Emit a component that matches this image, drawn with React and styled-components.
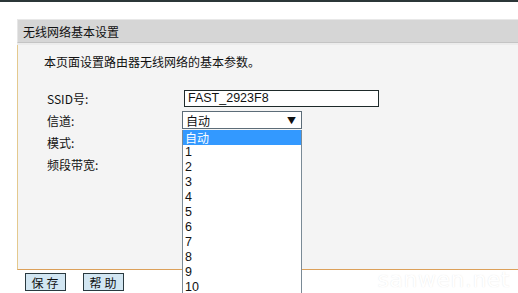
import React from "react";
import styled, { createGlobalStyle } from "styled-components";

const GlobalStyle = createGlobalStyle`
  html, body {
    margin: 0;
    padding: 0;
    background: #ffffff;
    overflow: hidden;
  }
  body {
    font-family: "Noto Sans CJK SC", "Liberation Sans", sans-serif;
    font-size: 12px;
    color: #111;
  }
`;

const Page = styled.div`
  position: relative;
  width: 518px;
  height: 293px;
  overflow: hidden;
  border-top: 2px solid #2b3638;
  box-sizing: border-box;
`;

const Panel = styled.div`
  margin: 17px 0 0 17px;
  display: flex;
  flex-direction: column;
  height: 274px;
`;

const Header = styled.div`
  height: 22px;
  background: #d6d6d6;
  border-top: 1px solid #e8e8e8;
  border-bottom: 1px solid #c4c4c4;
  box-shadow: 0 2px 0 #ececec;
  border-left: 1px solid #e6e6e6;
  display: flex;
  align-items: center;
  padding-left: 5px;
  font-size: 12px;
  color: #111;
`;

const Body = styled.div`
  flex: 1;
  background: #f4f4f4;
  border-left: 1px solid #e4c98e;
  border-bottom: 1px solid #dca05a;
  margin-top: 2px;
  padding: 8px 0 0 26px;
  display: flex;
  flex-direction: column;
`;

const Intro = styled.div`
  font-size: 12px;
  margin-bottom: 17px;
`;

const Form = styled.div`
  display: grid;
  grid-template-columns: 137px auto;
  grid-auto-rows: 22px;
  align-items: center;
  padding-left: 3px;
`;

const Label = styled.div`
  font-size: 12px;
`;

const TextInput = styled.div`
  width: 190px;
  height: 15px;
  border: 1px solid #1e2a2a;
  background: #fff;
  font-family: "Liberation Sans", Arial, sans-serif;
  font-size: 12.5px;
  line-height: 15px;
  padding-left: 3px;
`;

const SelectWrap = styled.div`
  position: relative;
  margin-left: -2px;
  width: 120px;
`;

const SelectBox = styled.div`
  height: 18px;
  border: 1px solid #5c6c78;
  background: #fff;
  display: flex;
  align-items: center;
  justify-content: space-between;
  padding: 0 5px 0 3px;
  font-size: 12px;
  box-sizing: border-box;
  width: 120px;
`;

const Arrow = styled.span`
  font-size: 9px;
  color: #111;
`;

const List = styled.div`
  position: absolute;
  top: 19px;
  left: 0;
  width: 120px;
  box-sizing: border-box;
  border: 1px solid #7a8a96;
  border-top: none;
  background: #fff;
  z-index: 5;
`;

const Option = styled.div`
  height: 15px;
  line-height: 15px;
  padding-left: 2px;
  font-family: ${(p) => (p.$num ? '"Liberation Sans", Arial, sans-serif' : 'inherit')};
  font-size: ${(p) => (p.$num ? "12.5px" : "12px")};
  background: ${(p) => (p.$active ? "#3399ff" : "#fff")};
  color: ${(p) => (p.$active ? "#fff" : "#111")};
`;

const Footer = styled.div`
  display: flex;
  gap: 17px;
  padding: 3px 0 0 8px;
  height: 20px;
`;

const Button = styled.div`
  height: 16px;
  width: 37px;
  border: 1px solid #2a3a40;
  background: #d2e6f2;
  font-size: 12px;
  letter-spacing: 3px;
  display: flex;
  align-items: center;
  justify-content: center;
  padding-left: 2px;
  box-sizing: content-box;
`;

const Watermark = styled.div`
  position: absolute;
  right: 8px;
  bottom: 1px;
  font-family: "DejaVu Sans", sans-serif;
  font-size: 22px;
  color: #ffffff;
  text-shadow: 0 0 1px rgba(140, 140, 140, 0.25);
  letter-spacing: 0.5px;
  z-index: 10;
`;

const channels = ["1", "2", "3", "4", "5", "6", "7", "8", "9", "10", "11"];

export default function App() {
  return (
    <>
      <GlobalStyle />
      <Page>
        <Panel>
          <Header>无线网络基本设置</Header>
          <Body>
            <Intro>本页面设置路由器无线网络的基本参数。</Intro>
            <Form>
              <Label>SSID号:</Label>
              <TextInput>FAST_2923F8</TextInput>
              <Label>信道:</Label>
              <SelectWrap>
                <SelectBox>
                  <span>自动</span>
                  <Arrow>▼</Arrow>
                </SelectBox>
                <List>
                  <Option $active>自动</Option>
                  {channels.map((c) => (
                    <Option key={c} $num>
                      {c}
                    </Option>
                  ))}
                </List>
              </SelectWrap>
              <Label>模式:</Label>
              <div />
              <Label>频段带宽:</Label>
              <div />
            </Form>
          </Body>
          <Footer>
            <Button>保存</Button>
            <Button>帮助</Button>
          </Footer>
        </Panel>
        <Watermark>sanwen.net</Watermark>
      </Page>
    </>
  );
}
